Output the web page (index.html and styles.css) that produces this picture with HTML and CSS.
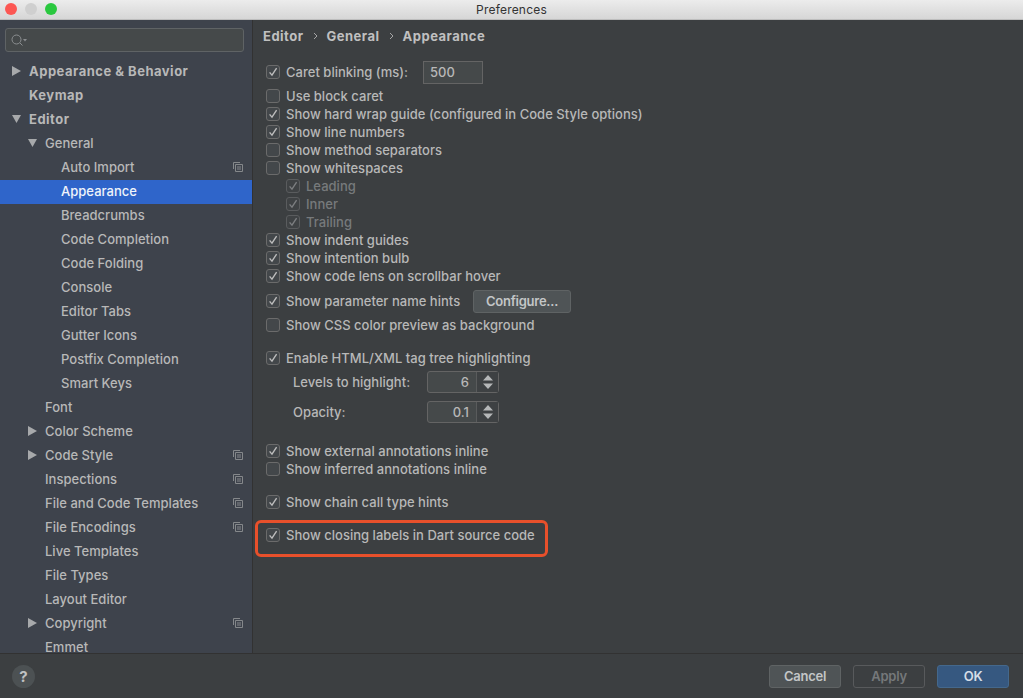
FILE: index.html
```html
<!DOCTYPE html>
<html lang="en">
<head>
<meta charset="utf-8">
<title>Preferences</title>
<link rel="stylesheet" href="styles.css">
</head>
<body>
<svg class="defs" width="0" height="0" aria-hidden="true">
  <symbol id="check" viewBox="0 0 14 14"><path d="M3.6 7.4 6 10.2 10.6 3.2" fill="none" stroke="currentColor" stroke-width="1.4"/></symbol>
  <symbol id="copy" viewBox="0 0 10 10"><path d="M.5 7V.5H7" fill="none" stroke="currentColor"/><path d="M2.5 2.5h7v7h-7zM4 5h4M4 7h4" fill="none" stroke="currentColor"/></symbol>
  <symbol id="right" viewBox="0 0 9 10"><path d="M0 0 9 5 0 10z" fill="currentColor"/></symbol>
  <symbol id="down" viewBox="0 0 10 9"><path d="M0 0H10L5 9z" fill="currentColor"/></symbol>
  <symbol id="updown" viewBox="0 0 10 16"><path d="M5 1 10 6.5H0zM5 15 0 9.5H10z" fill="currentColor"/></symbol>
  <symbol id="chev" viewBox="0 0 5 8"><path d="M1 1 4 4 1 7" fill="none" stroke="currentColor"/></symbol>
</svg>
<div class="window">
  <header class="titlebar">
    <div class="lights"><span class="light red"></span><span class="light gray"></span><span class="light green"></span></div>
    <span class="title">Preferences</span>
  </header>
  <div class="body">
    <aside class="sidebar">
      <div class="search">
        <svg class="search-icon" viewBox="0 0 16 12" width="16" height="12"><circle cx="5.500" cy="5.500" r="4.500" fill="none" stroke="#8b8e90"/><path d="M9 9l2.500 2.500" stroke="#8b8e90"/><path d="M12 5h4l-2 2.500z" fill="#8b8e90"/></svg>
      </div>
      <nav class="tree">
        <div class="node l0 strong"><svg class="arrow"><use href="#right"/></svg>Appearance &amp; Behavior</div>
        <div class="node l0 strong">Keymap</div>
        <div class="node l0 strong"><svg class="arrow"><use href="#down"/></svg>Editor</div>
        <div class="node l1"><svg class="arrow"><use href="#down"/></svg>General</div>
        <div class="node l2">Auto Import<svg class="copy"><use href="#copy"/></svg></div>
        <div class="node l2 selected">Appearance</div>
        <div class="node l2">Breadcrumbs</div>
        <div class="node l2">Code Completion</div>
        <div class="node l2">Code Folding</div>
        <div class="node l2">Console</div>
        <div class="node l2">Editor Tabs</div>
        <div class="node l2">Gutter Icons</div>
        <div class="node l2">Postfix Completion</div>
        <div class="node l2">Smart Keys</div>
        <div class="node l1">Font</div>
        <div class="node l1"><svg class="arrow"><use href="#right"/></svg>Color Scheme</div>
        <div class="node l1"><svg class="arrow"><use href="#right"/></svg>Code Style<svg class="copy"><use href="#copy"/></svg></div>
        <div class="node l1">Inspections<svg class="copy"><use href="#copy"/></svg></div>
        <div class="node l1">File and Code Templates<svg class="copy"><use href="#copy"/></svg></div>
        <div class="node l1">File Encodings<svg class="copy"><use href="#copy"/></svg></div>
        <div class="node l1">Live Templates</div>
        <div class="node l1">File Types</div>
        <div class="node l1">Layout Editor</div>
        <div class="node l1"><svg class="arrow"><use href="#right"/></svg>Copyright<svg class="copy"><use href="#copy"/></svg></div>
        <div class="node l1 last">Emmet</div>
      </nav>
    </aside>
    <main class="content">
      <div class="crumbs">
        <span>Editor</span><svg class="chev"><use href="#chev"/></svg>
        <span>General</span><svg class="chev"><use href="#chev"/></svg>
        <span>Appearance</span>
      </div>
      <div class="options">
        <div class="opt caret-row"><span class="box on"><svg><use href="#check"/></svg></span><span class="caret-label">Caret blinking (ms):</span><span class="field">500</span></div>
        <div class="opt"><span class="box"></span>Use block caret</div>
        <div class="opt"><span class="box on"><svg><use href="#check"/></svg></span>Show hard wrap guide (configured in Code Style options)</div>
        <div class="opt"><span class="box on"><svg><use href="#check"/></svg></span>Show line numbers</div>
        <div class="opt"><span class="box"></span>Show method separators</div>
        <div class="opt"><span class="box"></span>Show whitespaces</div>
        <div class="opt sub"><span class="box on"><svg><use href="#check"/></svg></span>Leading</div>
        <div class="opt sub"><span class="box on"><svg><use href="#check"/></svg></span>Inner</div>
        <div class="opt sub"><span class="box on"><svg><use href="#check"/></svg></span>Trailing</div>
        <div class="opt"><span class="box on"><svg><use href="#check"/></svg></span>Show indent guides</div>
        <div class="opt"><span class="box on"><svg><use href="#check"/></svg></span>Show intention bulb</div>
        <div class="opt"><span class="box on"><svg><use href="#check"/></svg></span>Show code lens on scrollbar hover</div>
        <div class="opt hints-row"><span class="box on"><svg><use href="#check"/></svg></span><span class="hints-label">Show parameter name hints</span><button class="btn configure" type="button">Configure...</button></div>
        <div class="opt css-row"><span class="box"></span>Show CSS color preview as background</div>
        <div class="opt group-start"><span class="box on"><svg><use href="#check"/></svg></span>Enable HTML/XML tag tree highlighting</div>
        <div class="spin-row first"><span class="spin-label">Levels to highlight:</span><span class="spinner"><span class="spin-value">6</span><span class="spin-arrows"><svg><use href="#updown"/></svg></span></span></div>
        <div class="spin-row"><span class="spin-label">Opacity:</span><span class="spinner"><span class="spin-value">0.1</span><span class="spin-arrows"><svg><use href="#updown"/></svg></span></span></div>
        <div class="opt annot-row"><span class="box on"><svg><use href="#check"/></svg></span>Show external annotations inline</div>
        <div class="opt"><span class="box"></span>Show inferred annotations inline</div>
        <div class="opt chain-row"><span class="box on"><svg><use href="#check"/></svg></span>Show chain call type hints</div>
        <div class="opt dart-row"><span class="box on"><svg><use href="#check"/></svg></span>Show closing labels in Dart source code<span class="mark"></span></div>
      </div>
    </main>
  </div>
  <footer class="footer">
    <span class="help">?</span>
    <div class="actions">
      <button class="btn" type="button">Cancel</button>
      <button class="btn disabled" type="button">Apply</button>
      <button class="btn primary" type="button">OK</button>
    </div>
  </footer>
</div>
</body>
</html>
```
FILE: styles.css
```css
* { box-sizing: border-box; }
html, body { margin: 0; height: 100%; overflow: hidden; }
body { background: #3c3f41; color: #b8b8b8; font: 500 13px/18px "Inter", "Liberation Sans", sans-serif; letter-spacing: .02px; }
.defs { position: absolute; }
.window { height: 698px; display: flex; flex-direction: column; }

.titlebar { height: 20px; flex: none; display: flex; align-items: center; justify-content: center; position: relative; background: linear-gradient(#ececec, #d6d6d6); border-bottom: 1px solid #bdbdbd; }
.lights { position: absolute; left: 5px; top: 3px; display: flex; gap: 8px; }
.light { width: 12px; height: 12px; border-radius: 50%; }
.red { background: #fc5753; }
.gray { background: #cfcfcf; }
.green { background: #2ac83f; }
.title { color: #333; font-size: 12px; font-weight: 400; letter-spacing: .2px; }

.body { flex: 1; min-height: 0; display: flex; }
.sidebar { width: 253px; flex: none; display: flex; flex-direction: column; background: #3e434c; border-right: 1px solid #323232; overflow: hidden; }
.search { height: 24px; margin: 8px 8px 8px 5px; flex: none; display: flex; align-items: center; padding-left: 5px; background: #45494a; border: 1px solid #5f6365; border-radius: 3px; }
.tree { flex: 1; overflow: hidden; }
.node { height: 24px; padding-bottom: 2px; line-height: 22px; position: relative; display: flex; align-items: center; white-space: nowrap; }
.node.last { height: 17px; padding: 5px 0 0 45px; line-height: 12px; }
.l0 { padding-left: 29px; }
.l1 { padding-left: 45px; }
.l2 { padding-left: 61px; }
.strong { font-weight: 700; letter-spacing: .5px; }
.selected { background: #2f65ca; color: #f0f4fa; }
.arrow { width: 9px; height: 10px; color: #a7a9ab; position: absolute; top: 6px; }
.l0 .arrow { left: 12px; }
.l1 .arrow { left: 28px; }
.copy { width: 10px; height: 10px; color: #85888b; position: absolute; left: 233px; top: 6px; }

.content { flex: 1; min-width: 0; padding: 7px 0 0 10px; }
.crumbs { display: flex; align-items: center; height: 18px; font-weight: 700; letter-spacing: .5px; color: #c0c0c0; }
.chev { width: 5px; height: 8px; margin: 0 9px 0 9px; color: #a5a5a5; }
.options { padding: 15px 0 0 3px; }
.opt { height: 18px; display: flex; align-items: center; white-space: nowrap; position: relative; }
.box { width: 14px; height: 14px; flex: none; margin-right: 6px; border: 1px solid #6b6b6b; border-radius: 3px; background: #43474a; color: #bdbdbd; display: block; }
.box svg { display: block; width: 14px; height: 14px; margin: -1px; }
.sub { padding-left: 20px; color: #777a7c; }
.sub .box { border-color: #5a5c5e; color: #7c7e80; background: #3f4244; }
.caret-row { height: 24px; margin-bottom: 3px; }
.caret-label { width: 137px; }
.field { width: 60px; height: 23px; padding-left: 6px; line-height: 21px; background: #45494a; border: 1px solid #646464; }
.hints-row { height: 22px; margin-top: 5px; }
.hints-label { width: 187px; }
.css-row { margin-top: 4px; }
.group-start { margin-top: 15px; }
.annot-row { margin-top: 19px; }
.chain-row { margin-top: 15px; }
.dart-row { margin-top: 15px; }
.mark { position: absolute; left: -11px; top: -6px; width: 293px; height: 37px; border: 3px solid #e8502b; border-radius: 6px; }

.btn { height: 23px; width: 72px; padding: 0; font: inherit; font-weight: 600; letter-spacing: -.25px; color: #c3c6c7; background: #4f5456; border: 1px solid #5f6364; border-radius: 3px; }
.configure { width: 98px; }
.disabled { color: #75787a; background: transparent; border-color: #585a5c; }
.primary { color: #d5dde6; background: #365880; border-color: #44688c; }

.spin-row { display: flex; align-items: center; height: 22px; padding-left: 27px; }
.spin-row.first { margin-top: 4px; margin-bottom: 8px; }
.spin-label { width: 134px; }
.spinner { width: 72px; height: 22px; display: flex; border: 1px solid #646464; border-radius: 3px; background: #45494a; }
.spin-value { flex: 1; text-align: right; padding-right: 7px; line-height: 20px; }
.spin-arrows { width: 22px; flex: none; display: flex; align-items: center; justify-content: center; background: #3e4143; border-left: 1px solid #595b5c; color: #b5b7b8; }
.spin-arrows svg { width: 10px; height: 16px; }

.footer { height: 45px; flex: none; display: flex; align-items: center; justify-content: space-between; padding: 0 14px 0 12px; background: #3c3f41; border-top: 1px solid #323232; }
.help { width: 23px; height: 23px; border-radius: 50%; background: #4c5153; color: #c0c2c3; text-align: center; line-height: 23px; font-size: 15px; font-weight: 700; }
.actions { display: flex; gap: 12px; }
```
